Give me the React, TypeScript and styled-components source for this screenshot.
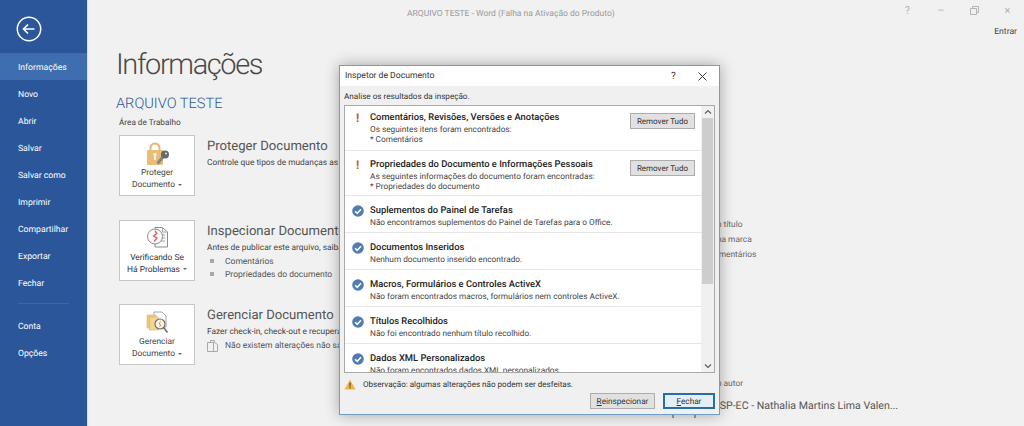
import React from "react";
import styled, { createGlobalStyle } from "styled-components";

const GlobalStyle = createGlobalStyle`
  html, body {
    margin: 0;
    padding: 0;
    background: #f1f1f1;
    font-family: Roboto, "Open Sans", sans-serif;
    text-rendering: geometricPrecision;
  }
`;

const NAV_TOP = ["Informações", "Novo", "Abrir", "Salvar", "Salvar como", "Imprimir", "Compartilhar", "Exportar", "Fechar"];
const NAV_BOTTOM = ["Conta", "Opções"];

const RESULTS = [
  { title: "Comentários, Revisões, Versões e Anotações", lines: ["Os seguintes itens foram encontrados:", "* Comentários"], found: true, height: 45, pad: 6 },
  { title: "Propriedades do Documento e Informações Pessoais", lines: ["As seguintes informações do documento foram encontradas:", "* Propriedades do documento"], found: true, height: 45, pad: 8 },
  { title: "Suplementos do Painel de Tarefas", lines: ["Não encontramos suplementos do Painel de Tarefas para o Office."], found: false, height: 37, pad: 9 },
  { title: "Documentos Inseridos", lines: ["Nenhum documento inserido encontrado."], found: false, height: 37, pad: 9 },
  { title: "Macros, Formulários e Controles ActiveX", lines: ["Não foram encontrados macros, formulários nem controles ActiveX."], found: false, height: 37, pad: 9 },
  { title: "Títulos Recolhidos", lines: ["Não foi encontrado nenhum título recolhido."], found: false, height: 37, pad: 9 },
  { title: "Dados XML Personalizados", lines: ["Não foram encontrados dados XML personalizados."], found: false, height: 37, pad: 9 },
];

const BackIcon = () => (
  <svg width="26" height="26" viewBox="0 0 26 26" fill="none" stroke="#fff">
    <circle cx="13" cy="13" r="11.7" strokeWidth="1.5" />
    <path d="M7.5 13h11M12 8.5 7.5 13l4.5 4.5" strokeWidth="1.6" />
  </svg>
);

const LockIcon = () => (
  <svg width="26" height="24" viewBox="-3 0 26 24">
    <path d="M3.5 8V6a4.5 4.5 0 0 1 9 0v2" fill="none" stroke="#e3b673" strokeWidth="2" />
    <rect x="0" y="8" width="16" height="15" rx="1" fill="#e9bd78" />
    <rect x="7" y="12" width="2" height="6" fill="#fff3dc" />
    <circle cx="8" cy="12.5" r="1.8" fill="#fff3dc" />
    <path d="M16 15 10.5 21.5" stroke="#858585" strokeWidth="3" />
    <circle cx="18" cy="12.5" r="4" fill="#686868" />
    <circle cx="19" cy="11.5" r="1" fill="#e6e6e6" />
  </svg>
);

const InspectIcon = () => (
  <svg width="21" height="21" viewBox="0 0 21 21" fill="none">
    <path d="M8 .5h7.5l5 4.5v15H8z" fill="#f8f8f8" stroke="#8c8c8c" />
    <path d="M15.5.5V5h5M14 8h4M14 11h4M14 14h4" stroke="#a8a8a8" />
    <circle cx="8" cy="9.5" r="7.5" fill="#fbfbfb" stroke="#8c8c8c" />
    <path d="M8 4 10 6.5 6.5 9 10 11 7 14.5" stroke="#d2655a" strokeWidth="1.3" />
  </svg>
);

const ManageIcon = () => (
  <svg width="22" height="23" viewBox="0 0 22 23" fill="none">
    <path d="M8 1h8l4 4v11H8z" fill="#fff" stroke="#a5a5a5" />
    <rect x="1" y="4" width="9" height="13" fill="#efc980" stroke="#dcb067" strokeWidth=".6" />
    <rect x="3.5" y="6" width="9" height="13" fill="#f3d493" stroke="#dcb067" strokeWidth=".6" />
    <circle cx="14" cy="13" r="5" fill="#fbf3e4" stroke="#6e6e6e" strokeWidth="1.2" />
    <path d="M17.5 16.5 21.5 21.5" stroke="#6e6e6e" strokeWidth="1.6" />
    <path d="M14.6 10.5 13 13l2 1-1.5 2" stroke="#c79a4d" />
  </svg>
);

const CheckIcon = () => (
  <svg width="12" height="12" viewBox="0 0 12 12">
    <circle cx="6" cy="6" r="5.8" fill="#4f7cb3" />
    <path d="M3.1 6.2 5.2 8.3 9 4.2" fill="none" stroke="#fff" strokeWidth="1.5" />
  </svg>
);

const WarningIcon = () => (
  <svg width="12" height="11" viewBox="0 0 12 11">
    <path d="M6 .5 11.6 10.5H.4z" fill="#efb44c" />
    <rect x="5.4" y="3.6" width="1.2" height="4" fill="#5f4a22" />
    <rect x="5.4" y="8.2" width="1.2" height="1.2" fill="#5f4a22" />
  </svg>
);

const NoteIcon = () => (
  <svg width="11" height="12" viewBox="0 0 11 12" fill="none" stroke="#a9a9a9">
    <path d="M.5 2.5h7l3 2v7h-10z" />
    <path d="M3.5 2.5v-2h4v2M6.5 2.5v9" />
  </svg>
);

const Chevron = ({ up }: { up?: boolean }) => (
  <svg width="8" height="6" viewBox="0 0 8 6" fill="none" stroke="#5f5f5f" strokeWidth="1.2">
    <path d={up ? "M1 4.5 4 1.5l3 3" : "M1 1.5 4 4.5l3-3"} />
  </svg>
);

const Caret = () => <CaretMark />;

export default function App() {
  return (
    <Page>
      <GlobalStyle />
      <Sidebar>
        <BackButton><BackIcon /></BackButton>
        {NAV_TOP.map((label, i) => (
          <NavItem key={label} $active={i === 0}>{label}</NavItem>
        ))}
        <NavDivider />
        {NAV_BOTTOM.map((label) => (
          <NavItem key={label}>{label}</NavItem>
        ))}
      </Sidebar>

      <Main>
        <TitleBar>
          <WindowTitle>ARQUIVO TESTE - Word (Falha na Ativação do Produto)</WindowTitle>
          <WindowControls>
            <WindowControl>?</WindowControl>
            <WindowControl>–</WindowControl>
            <WindowControl>
              <svg width="9" height="9" viewBox="0 0 9 9" fill="none" stroke="#b4b4b4">
                <path d="M.5 2.5h6v6h-6zM2.5 2.5v-2h6v6h-2" />
              </svg>
            </WindowControl>
            <WindowControl>×</WindowControl>
          </WindowControls>
        </TitleBar>
        <SignIn>Entrar</SignIn>

        <Content>
          <LeftColumn>
            <Heading>Informações</Heading>
            <FileName>ARQUIVO TESTE</FileName>
            <FilePath>Área de Trabalho</FilePath>
            <Sections>
              <Section>
                <ActionCard>
                  <CardIcon><LockIcon /></CardIcon>
                  <CardLabel>Proteger<br />Documento<Caret /></CardLabel>
                </ActionCard>
                <SectionText>
                  <SectionTitle>Proteger Documento</SectionTitle>
                  <SectionDesc>Controle que tipos de mudanças as pessoas podem fazer neste documento.</SectionDesc>
                </SectionText>
              </Section>
              <Section>
                <ActionCard>
                  <CardIcon><InspectIcon /></CardIcon>
                  <CardLabel $dark>Verificando Se<br />Há Problemas<Caret /></CardLabel>
                </ActionCard>
                <SectionText>
                  <SectionTitle>Inspecionar Documento</SectionTitle>
                  <SectionDesc>Antes de publicar este arquivo, saiba que ele contém:</SectionDesc>
                  <BulletRow><Bullet />Comentários</BulletRow>
                  <BulletRow><Bullet />Propriedades do documento</BulletRow>
                </SectionText>
              </Section>
              <Section>
                <ActionCard>
                  <CardIcon><ManageIcon /></CardIcon>
                  <CardLabel>Gerenciar<br />Documento<Caret /></CardLabel>
                </ActionCard>
                <SectionText>
                  <SectionTitle>Gerenciar Documento</SectionTitle>
                  <SectionDesc>Fazer check-in, check-out e recuperar alterações não salvas.</SectionDesc>
                  <BulletRow><NoteSlot><NoteIcon /></NoteSlot>Não existem alterações não salvas.</BulletRow>
                </SectionText>
              </Section>
            </Sections>
          </LeftColumn>

          <RightColumn>
            <PropValue>Adicionar um título</PropValue>
            <PropValue>Adicionar uma marca</PropValue>
            <PropValue>Adicionar comentários</PropValue>
            <AuthorValue>Adicionar um autor</AuthorValue>
            <OwnerRow>
              <OwnerAvatar />
              <OwnerName>LASP-EC - Nathalia Martins Lima Valen...</OwnerName>
            </OwnerRow>
          </RightColumn>
        </Content>
      </Main>

      <Dialog>
        <DialogTitleBar>
          <DialogTitle>Inspetor de Documento</DialogTitle>
          <DialogHelp>?</DialogHelp>
          <DialogClose>
            <svg width="9" height="9" viewBox="0 0 9 9" stroke="#333" strokeWidth="1"><path d="M.5.5l8 8M8.5.5l-8 8" /></svg>
          </DialogClose>
        </DialogTitleBar>
        <Instruction>Analise os resultados da inspeção.</Instruction>
        <ResultsBox>
          <ResultsList>
            {RESULTS.map((r) => (
              <ResultRow key={r.title} $height={r.height} $pad={r.pad}>
                <StatusSlot>
                  {r.found ? <Alert>!</Alert> : <CheckIcon />}
                </StatusSlot>
                <ResultBody>
                  <ResultTitle>{r.title}</ResultTitle>
                  {r.lines.map((line) => (
                    <ResultLine key={line}>{line}</ResultLine>
                  ))}
                </ResultBody>
                {r.found && <RemoveButton>Remover Tudo</RemoveButton>}
              </ResultRow>
            ))}
          </ResultsList>
          <ScrollTrack>
            <ScrollArrow><Chevron up /></ScrollArrow>
            <ScrollThumb />
            <ScrollSpacer />
            <ScrollArrow><Chevron /></ScrollArrow>
          </ScrollTrack>
        </ResultsBox>
        <Note>
          <WarningIcon />
          <span>Observação: algumas alterações não podem ser desfeitas.</span>
        </Note>
        <DialogFooter>
          <FooterButton><u>R</u>einspecionar</FooterButton>
          <FooterButton $primary><u>F</u>echar</FooterButton>
        </DialogFooter>
      </Dialog>
    </Page>
  );
}

const Page = styled.div`
  position: relative;
  display: flex;
  width: 1024px;
  height: 426px;
  overflow: hidden;
  background: #f1f1f1;
`;

// Barra lateral
const Sidebar = styled.nav`
  display: flex;
  flex-direction: column;
  flex: 0 0 87px;
  background: #2b579a;
  box-shadow: 1px 0 1px rgba(0, 0, 0, 0.08);
`;

const BackButton = styled.div`
  display: flex;
  align-items: center;
  height: 53px;
  padding: 4px 0 0 16px;
  box-sizing: border-box;
`;

const NavItem = styled.div<{ $active?: boolean }>`
  height: 27px;
  line-height: 30px;
  padding-left: 18px;
  font-size: 8.65px;
  color: #fff;
  background: ${(p) => (p.$active ? "#3e6db0" : "transparent")};
`;

const NavDivider = styled.div`
  height: 1px;
  margin: 7px 18px 8px;
  background: #3d67a6;
`;

// Area principal
const Main = styled.main`
  flex: 1;
  min-width: 0;
`;

const TitleBar = styled.div`
  display: flex;
  align-items: center;
  height: 22px;
  padding: 6px 0 0 320px;
  box-sizing: border-box;
`;

const WindowTitle = styled.div`
  font-size: 8.5px;
  color: #9a9a9a;
  white-space: nowrap;
`;

const WindowControls = styled.div`
  display: flex;
  margin: 0 0 8px auto;
`;

const WindowControl = styled.div`
  display: flex;
  align-items: center;
  justify-content: center;
  width: 33.3px;
  font-size: 11px;
  color: #b4b4b4;
`;

const SignIn = styled.div`
  height: 16px;
  line-height: 20px;
  padding-right: 7px;
  text-align: right;
  font-size: 8.6px;
  color: #444;
`;

const Content = styled.div`
  display: flex;
  padding: 8px 0 0 29px;
`;

const LeftColumn = styled.div`
  flex: 0 0 556px;
`;

const Heading = styled.h1`
  margin: 0;
  height: 36px;
  line-height: 38px;
  font-size: 29px;
  font-weight: 300;
  letter-spacing: -1.4px;
  color: #4a4a4a;
`;

const FileName = styled.div`
  margin-top: 11px;
  height: 20px;
  line-height: 20px;
  font-size: 14.6px;
  font-weight: 300;
  color: #2b579a;
`;

const FilePath = styled.div`
  margin: 1px 0 0 3px;
  height: 14px;
  line-height: 18px;
  font-size: 8.2px;
  color: #444;
`;

const Sections = styled.div`
  display: flex;
  flex-direction: column;
  gap: 23.5px;
  margin: 7px 0 0 3px;
`;

const Section = styled.section`
  display: flex;
  gap: 12px;
`;

const ActionCard = styled.div`
  display: flex;
  flex-direction: column;
  align-items: center;
  flex: 0 0 76px;
  height: 61px;
  box-sizing: border-box;
  padding-top: 6px;
  background: #fff;
  border: 1px solid #c6c6c6;
`;

const CardIcon = styled.div`
  display: flex;
  height: 24px;
`;

const CardLabel = styled.div<{ $dark?: boolean }>`
  margin-top: 1px;
  font-size: 8.4px;
  line-height: 12px;
  text-align: center;
  white-space: nowrap;
  color: ${(p) => (p.$dark ? "#333" : "#444")};
`;

const CaretMark = styled.span`
  display: inline-block;
  margin-left: 3px;
  vertical-align: middle;
  border-left: 2px solid transparent;
  border-right: 2px solid transparent;
  border-top: 2px solid #666;
`;

const SectionText = styled.div`
  min-width: 0;
  white-space: nowrap;
`;

const SectionTitle = styled.div`
  height: 20px;
  line-height: 24px;
  font-size: 13.1px;
  color: #555;
`;

const SectionDesc = styled.div`
  height: 14px;
  line-height: 17px;
  font-size: 8.35px;
  color: #444;
`;

const BulletRow = styled.div`
  display: flex;
  align-items: center;
  height: 13.5px;
  padding-top: 3px;
  box-sizing: border-box;
  font-size: 8.5px;
  color: #555;
`;

const Bullet = styled.span`
  flex: none;
  width: 4px;
  height: 4px;
  margin: 0 11px 2px 3px;
  background: #a8a8a8;
`;

const NoteSlot = styled.span`
  display: flex;
  flex: none;
  width: 18px;
`;

const RightColumn = styled.div`
  display: flex;
  flex-direction: column;
  padding-top: 171px;
  white-space: nowrap;
`;

const PropValue = styled.div`
  height: 15px;
  line-height: 17px;
  font-size: 8.4px;
  color: #666;
`;

const AuthorValue = styled(PropValue)`
  margin-top: 114px;
`;

const OwnerRow = styled.div`
  display: flex;
  align-items: center;
  gap: 11px;
  margin-top: 3px;
`;

const OwnerAvatar = styled.div`
  flex: none;
  width: 24px;
  height: 24px;
  box-sizing: border-box;
  border-left: 2px solid #999;
  border-right: 2px solid #999;
`;

const OwnerName = styled.div`
  height: 20px;
  line-height: 20px;
  font-size: 10.6px;
  color: #555;
`;

// Janela do inspetor
const Dialog = styled.div`
  position: absolute;
  left: 339px;
  top: 65px;
  width: 381px;
  height: 350px;
  box-sizing: border-box;
  display: flex;
  flex-direction: column;
  padding: 0 4px;
  background: #f0f0f0;
  border: 1px solid #6f9ec8;
  box-shadow: 0 0 14px rgba(0, 0, 0, 0.32);
`;

const DialogTitleBar = styled.div`
  display: flex;
  align-items: center;
  height: 20px;
  margin: 0 -4px;
  padding-left: 5px;
  box-sizing: border-box;
  background: #fff;
`;

const DialogTitle = styled.div`
  flex: 1;
  font-size: 8.6px;
  color: #333;
`;

const DialogHelp = styled.div`
  width: 27px;
  font-size: 10px;
  color: #333;
`;

const DialogClose = styled.div`
  display: flex;
  width: 21px;
`;

const Instruction = styled.div`
  height: 19px;
  line-height: 20px;
  font-size: 8.15px;
  color: #333;
`;

const ResultsBox = styled.div`
  display: flex;
  height: 268px;
  box-sizing: border-box;
  background: #fff;
  border: 1px solid #a9a9a9;
  overflow: hidden;
`;

const ResultsList = styled.div`
  flex: 1;
  min-width: 0;
`;

const ResultRow = styled.div<{ $height: number; $pad: number }>`
  display: flex;
  height: ${(p) => p.$height}px;
  box-sizing: border-box;
  padding-top: ${(p) => p.$pad}px;
  border-bottom: 1px solid #e6e6e6;
`;

const StatusSlot = styled.div`
  display: flex;
  justify-content: center;
  flex: 0 0 25px;
`;

const Alert = styled.span`
  font-size: 12px;
  line-height: 12px;
  font-weight: 700;
  color: #c9503f;
`;

const ResultBody = styled.div`
  flex: 1;
  min-width: 0;
`;

const ResultTitle = styled.div`
  height: 13px;
  line-height: 12px;
  font-size: 9.4px;
  font-weight: 500;
  color: #222;
`;

const ResultLine = styled.div`
  height: 10px;
  line-height: 10px;
  font-size: 8.25px;
  color: #444;
`;

const RemoveButton = styled.div`
  align-self: flex-start;
  width: 65px;
  height: 16px;
  margin: 1px 6px 0 0;
  line-height: 15px;
  box-sizing: border-box;
  text-align: center;
  font-size: 8px;
  color: #333;
  background: #e1e1e1;
  border: 1px solid #adadad;
`;

const ScrollTrack = styled.div`
  display: flex;
  flex-direction: column;
  flex: 0 0 13px;
  background: #f0f0f0;
`;

const ScrollArrow = styled.div`
  display: flex;
  align-items: center;
  justify-content: center;
  flex: 0 0 12px;
`;

const ScrollThumb = styled.div`
  flex: 0 0 166px;
  margin: 0 1px;
  background: #cdcdcd;
`;

const ScrollSpacer = styled.div`
  flex: 1;
`;

const Note = styled.div`
  display: flex;
  align-items: center;
  gap: 7px;
  height: 22px;
  font-size: 8.07px;
  color: #333;
`;

const DialogFooter = styled.div`
  display: flex;
  justify-content: flex-end;
  gap: 8px;
  margin-top: -2px;
`;

const FooterButton = styled.div<{ $primary?: boolean }>`
  width: ${(p) => (p.$primary ? "52px" : "65px")};
  height: 16px;
  box-sizing: border-box;
  line-height: ${(p) => (p.$primary ? "14px" : "16px")};
  text-align: center;
  font-size: 8.2px;
  color: #333;
  background: ${(p) => (p.$primary ? "#e3eef7" : "#e1e1e1")};
  border: ${(p) => (p.$primary ? "2px solid #2b6ca3" : "1px solid #adadad")};
`;
